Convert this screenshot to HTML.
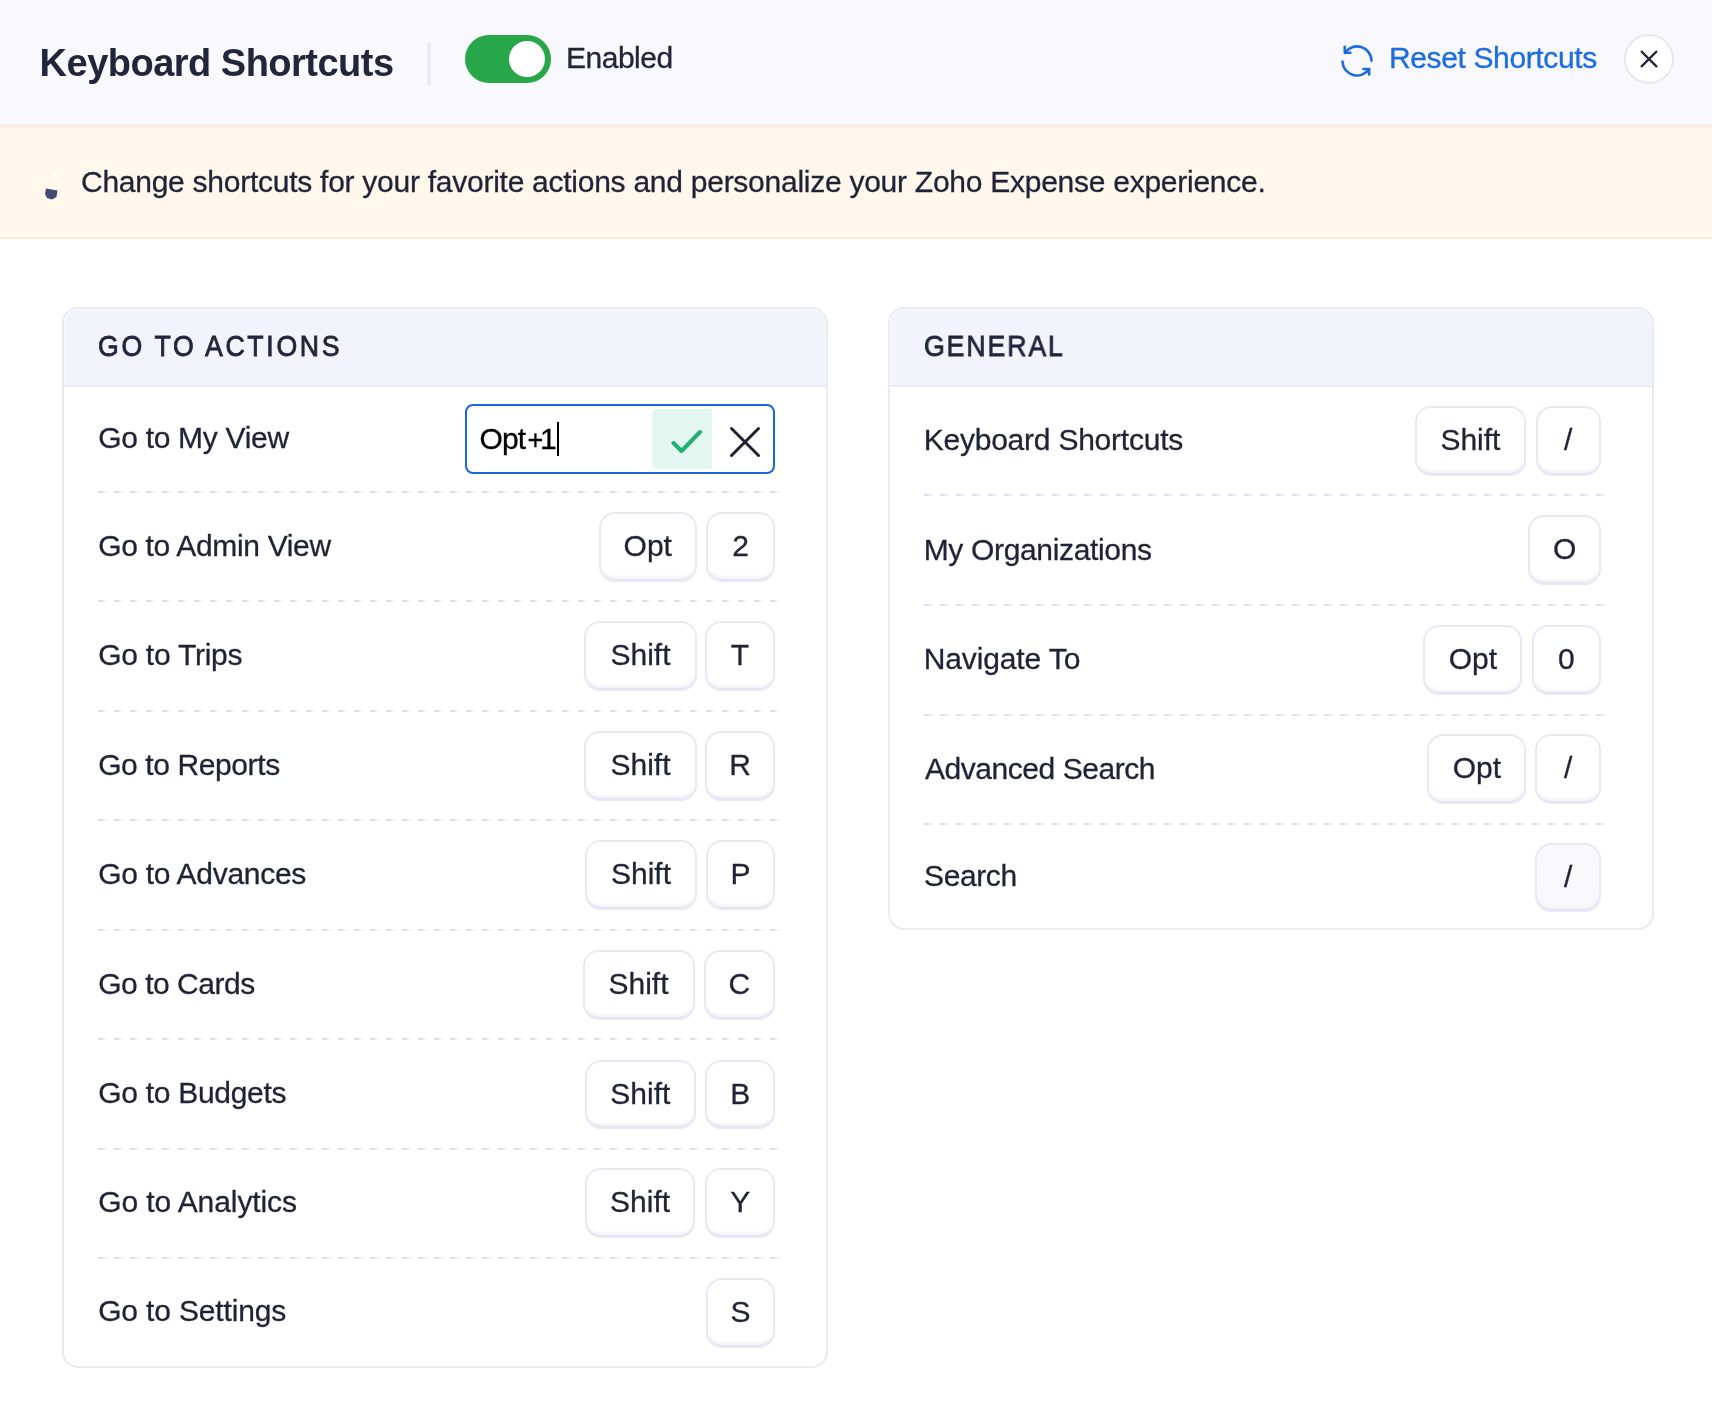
<!DOCTYPE html>
<html><head><meta charset="utf-8"><title>Keyboard Shortcuts</title><style>
*{margin:0;padding:0;box-sizing:border-box}
html,body{width:1712px;height:1414px;overflow:hidden;background:#fff}
body{position:relative;font-family:"Liberation Sans",sans-serif;color:#1f2336}
.wrap{position:absolute;left:0;top:0;width:1712px;height:1414px;will-change:transform}
.a{position:absolute;white-space:nowrap}
.t{position:absolute;white-space:nowrap;font-size:30px;line-height:30px;-webkit-text-stroke:0.3px currentColor}
.hdr{position:absolute;left:0;top:0;width:1712px;height:126px;background:#f8f8fd;border-bottom:2px solid #f0f0fc}
.ban{position:absolute;left:0;top:126px;width:1712px;height:113px;background:#fff6ec;border-top:2px solid #fbebd9;border-bottom:2px solid #fbebd9}
.card{position:absolute;border:2px solid #e9e9f7;border-radius:16px;background:#fff;overflow:hidden}
.ch{position:absolute;left:0;top:0;right:0;height:78px;background:#f3f3fc;border-bottom:2px solid #e9e9f7;box-shadow:inset 1px 1px 0 rgba(255,255,255,.55);border-radius:14px 14px 0 0}
.key{position:absolute;height:69.5px;border:2px solid #e8e8f7;border-radius:16px;background:#fff;box-shadow:inset 0 -2px 1px -1px #e2e2ee,inset 0 -6px 4px -3px #f1f1f6;font-size:30px;line-height:63px;text-align:center;color:#1f2336;-webkit-text-stroke:0.3px currentColor}
.sep{position:absolute;height:2px;background-image:linear-gradient(to right,#d6d6ef 0,#dcdcf2 3px,rgba(226,226,246,0) 10.5px);background-size:16px 2px;background-repeat:repeat-x}
</style></head><body><div class="wrap">
<div class="hdr"></div>
<div class="a" style="left:39.6px;top:43.7px;font-size:38px;line-height:38px;font-weight:bold;color:#21263a;letter-spacing:-0.51px">Keyboard Shortcuts</div>
<div class="a" style="left:427px;top:42px;width:4px;height:44px;background:#ebebf7;border-radius:2px"></div>
<div class="a" style="left:465px;top:35px;width:86px;height:48px;border-radius:24px;background:#28a74a"></div>
<div class="a" style="left:509px;top:41px;width:36px;height:36px;border-radius:18px;background:#fff"></div>
<div class="t" style="left:566px;top:43.3px;color:#21263a;letter-spacing:-0.50px">Enabled</div>
<svg class="a" style="left:1336px;top:40px" width="42" height="42" viewBox="0 0 42 42"><g fill="none" stroke="#1c6be0" stroke-width="2.6" stroke-linecap="round" stroke-linejoin="round">
<path d="M9 12.8 A14.5 14.5 0 0 1 35.5 20.6"/><path d="M6.5 21.6 A14.5 14.5 0 0 0 33.1 29"/>
<path d="M8.7 6.9 L8.9 12.8 L14.4 12.8"/><path d="M27.4 29 L33.1 29 L33.1 34.5"/></g></svg>
<div class="t" style="left:1389px;top:42.9px;color:#1c6de0;letter-spacing:-0.37px">Reset Shortcuts</div>
<div class="a" style="left:1624px;top:34px;width:50px;height:50px;border-radius:25px;background:#fff;border:2px solid #e7e7f7"></div>
<svg class="a" style="left:1637px;top:47px" width="24" height="24" viewBox="0 0 24 24"><g stroke="#21263a" stroke-width="2.2" stroke-linecap="round"><path d="M4.6 4.6L19.4 19.4M19.4 4.6L4.6 19.4"/></g></svg>
<div class="ban"></div>
<svg class="a" style="left:40px;top:168px" width="24" height="36" viewBox="0 0 24 36"><path d="M6 20.5 L17.5 22.5 L16.5 29 L12 31.5 L7 30 L5 26 Z" fill="#454a74"/><path d="M16.6 2.8 L10.8 9 L15.2 9 L13.6 14.4 L20 8.2 L15.6 8.2 Z" fill="#ffffff"/></svg>
<div class="t" style="left:81px;top:166.9px;letter-spacing:-0.26px">Change shortcuts for your favorite actions and personalize your Zoho Expense experience.</div>
<div class="card" style="left:62px;top:307px;width:766px;height:1061px">
<div class="ch"></div>
</div>
<div class="a" style="left:98px;top:331.8px;font-size:29px;line-height:29px;font-weight:normal;-webkit-text-stroke:0.8px #21263a;letter-spacing:2.90px;word-spacing:0.0px;color:#21263a;transform:scaleX(0.92);transform-origin:0 0">GO TO ACTIONS</div>
<div class="t" style="left:98.2px;top:423.1px;letter-spacing:-0.30px">Go to My View</div>
<div class="t" style="left:98.2px;top:531.1px;letter-spacing:-0.33px">Go to Admin View</div>
<div class="t" style="left:98.2px;top:640.2px;letter-spacing:-0.24px">Go to Trips</div>
<div class="t" style="left:98.2px;top:749.8px;letter-spacing:-0.40px">Go to Reports</div>
<div class="t" style="left:98.2px;top:859.2px;letter-spacing:-0.28px">Go to Advances</div>
<div class="t" style="left:98.2px;top:969.4px;letter-spacing:-0.47px">Go to Cards</div>
<div class="t" style="left:98.2px;top:1078.2px;letter-spacing:-0.29px">Go to Budgets</div>
<div class="t" style="left:98.2px;top:1186.8px;letter-spacing:-0.09px">Go to Analytics</div>
<div class="t" style="left:98.2px;top:1296.2px;letter-spacing:-0.16px">Go to Settings</div>
<div class="sep" style="left:98px;top:491.0px;width:684px"></div>
<div class="sep" style="left:98px;top:600.4px;width:684px"></div>
<div class="sep" style="left:98px;top:709.9px;width:684px"></div>
<div class="sep" style="left:98px;top:819.3px;width:684px"></div>
<div class="sep" style="left:98px;top:928.7px;width:684px"></div>
<div class="sep" style="left:98px;top:1038.2px;width:684px"></div>
<div class="sep" style="left:98px;top:1147.6px;width:684px"></div>
<div class="sep" style="left:98px;top:1257.0px;width:684px"></div>
<div class="card" style="left:888px;top:307px;width:766px;height:623px">
<div class="ch"></div>
</div>
<div class="a" style="left:924px;top:331.8px;font-size:29px;line-height:29px;font-weight:normal;-webkit-text-stroke:0.8px #21263a;letter-spacing:2.05px;word-spacing:0.0px;color:#21263a;transform:scaleX(0.92);transform-origin:0 0">GENERAL</div>
<div class="t" style="left:923.7px;top:425.3px;letter-spacing:-0.23px">Keyboard Shortcuts</div>
<div class="t" style="left:923.7px;top:534.5px;letter-spacing:-0.34px">My Organizations</div>
<div class="t" style="left:923.7px;top:644.0px;letter-spacing:-0.12px">Navigate To</div>
<div class="t" style="left:925.0px;top:753.8px;letter-spacing:-0.45px">Advanced Search</div>
<div class="t" style="left:924.0px;top:861.2px;letter-spacing:-0.38px">Search</div>
<div class="sep" style="left:924px;top:494.0px;width:684px"></div>
<div class="sep" style="left:924px;top:604.0px;width:684px"></div>
<div class="sep" style="left:924px;top:713.5px;width:684px"></div>
<div class="sep" style="left:924px;top:823.0px;width:684px"></div>
<div class="key" style="left:598.5px;top:512.3px;width:98.5px">Opt</div>
<div class="key" style="left:706.0px;top:512.3px;width:69.0px">2</div>
<div class="key" style="left:584.0px;top:621.4px;width:113.0px">Shift</div>
<div class="key" style="left:705.0px;top:621.4px;width:70.0px">T</div>
<div class="key" style="left:584.0px;top:731.3px;width:113.0px">Shift</div>
<div class="key" style="left:705.0px;top:731.3px;width:70.0px">R</div>
<div class="key" style="left:585.0px;top:840.3px;width:112.0px">Shift</div>
<div class="key" style="left:706.0px;top:840.3px;width:69.0px">P</div>
<div class="key" style="left:582.5px;top:950.4px;width:112.0px">Shift</div>
<div class="key" style="left:703.5px;top:950.4px;width:71.5px">C</div>
<div class="key" style="left:584.7px;top:1059.5px;width:111.3px">Shift</div>
<div class="key" style="left:705.4px;top:1059.5px;width:69.6px">B</div>
<div class="key" style="left:584.7px;top:1168.3px;width:110.8px">Shift</div>
<div class="key" style="left:705.4px;top:1168.3px;width:69.6px">Y</div>
<div class="key" style="left:706.0px;top:1278.0px;width:69.0px">S</div>
<div class="key" style="left:1414.7px;top:406.2px;width:111.5px">Shift</div>
<div class="key" style="left:1535.5px;top:406.2px;width:65.3px">/</div>
<div class="key" style="left:1528.3px;top:515.4px;width:72.5px">O</div>
<div class="key" style="left:1423.3px;top:625.4px;width:99.2px">Opt</div>
<div class="key" style="left:1532.0px;top:625.4px;width:68.8px">0</div>
<div class="key" style="left:1427.2px;top:734.3px;width:99.3px">Opt</div>
<div class="key" style="left:1535.3px;top:734.3px;width:65.5px">/</div>
<div class="key" style="left:1535.3px;top:842.6px;width:65.5px;background:#f7f7fc">/</div>
<div class="a" style="left:465px;top:404px;width:310px;height:70px;border:2px solid #1a67e0;border-radius:8px;background:#fff"></div>
<div class="t" style="left:479.5px;top:424.1px;color:#000;letter-spacing:-0.9px">Opt</div>
<div class="t" style="left:527.5px;top:424.9px;color:#000;font-size:27px">+</div>
<div class="t" style="left:540px;top:424.1px;color:#000">1</div>
<div class="a" style="left:557px;top:422px;width:2px;height:34px;background:#000"></div>
<div class="a" style="left:652px;top:409px;width:60px;height:60px;background:#e3f6ef;border-radius:6px 0 0 6px"></div>
<svg class="a" style="left:652px;top:409px" width="60" height="60" viewBox="0 0 60 60"><path d="M21.5 34 L29.5 42 L48 23" fill="none" stroke="#22b071" stroke-width="4" stroke-linecap="round" stroke-linejoin="round"/></svg>
<svg class="a" style="left:715px;top:409px" width="60" height="60" viewBox="0 0 60 60"><path d="M16.5 19.5 L43.5 46.5 M43.5 19.5 L16.5 46.5" fill="none" stroke="#1e2230" stroke-width="3" stroke-linecap="round"/></svg>
</div></body></html>
